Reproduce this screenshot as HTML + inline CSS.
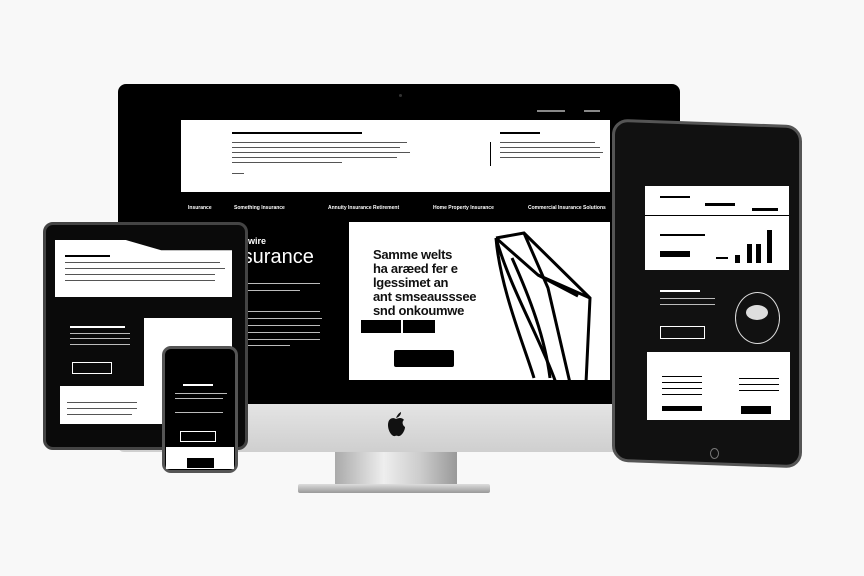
<!DOCTYPE html>
<html><head><meta charset="utf-8"><style>
*{margin:0;padding:0;box-sizing:border-box}
body{width:864px;height:576px;background:#f8f8f8;position:relative;overflow:hidden;font-family:"Liberation Sans",sans-serif}
.a{position:absolute}
.w{background:#fff}.b{background:#000}
.l{position:absolute;height:1px;background:#555}
.lw{position:absolute;height:1px;background:#bbb}
.t{position:absolute;font-weight:bold;font-size:5px;color:#fff;white-space:nowrap}
</style></head><body>
<!-- iMac -->
<div class="a" style="left:335px;top:450px;width:122px;height:36px;background:linear-gradient(90deg,#aaa,#eee 40%,#ccc 70%,#999)"></div>
<div class="a" style="left:298px;top:484px;width:192px;height:9px;background:linear-gradient(#ddd,#999);border-radius:2px"></div>
<div class="a" style="left:118px;top:400px;width:562px;height:52px;background:linear-gradient(#e6e6e6,#cfcfcf);border-radius:0 0 6px 6px"></div>
<svg class="a" style="left:385px;top:410px" width="22" height="28" viewBox="0 0 22 28"><path d="M11 8C13 3 16 2 16 2 16 5 14 7 11 8Z" fill="#111"/><path d="M11 9C8 7 3 8 3 15 3 21 7 27 10 26 11 25.5 12 25.5 13 26 16 27 20 21 20 17 17 15 17 11 19 10 17 7 13 8 11 9Z" fill="#111"/></svg>
<div class="a b" style="left:118px;top:84px;width:562px;height:320px;border-radius:8px 8px 0 0"></div>
<div class="a" style="left:399px;top:94px;width:3px;height:3px;border-radius:50%;background:#333"></div>
<div class="a" style="left:537px;top:110px;width:28px;height:2px;background:#888"></div>
<div class="a" style="left:584px;top:110px;width:16px;height:2px;background:#888"></div>
<div class="a w" style="left:181px;top:120px;width:429px;height:72px"></div>
<div class="a b" style="left:232px;top:132px;width:130px;height:2px"></div>
<div class="l" style="left:232px;top:142px;width:175px"></div><div class="l" style="left:232px;top:147px;width:168px"></div>
<div class="l" style="left:232px;top:152px;width:178px"></div><div class="l" style="left:232px;top:157px;width:165px"></div>
<div class="l" style="left:232px;top:162px;width:110px"></div><div class="l" style="left:232px;top:173px;width:12px"></div>
<div class="a b" style="left:500px;top:132px;width:40px;height:2px"></div>
<div class="a b" style="left:490px;top:142px;width:1px;height:24px"></div>
<div class="l" style="left:500px;top:142px;width:95px"></div><div class="l" style="left:500px;top:147px;width:100px"></div>
<div class="l" style="left:500px;top:152px;width:103px"></div><div class="l" style="left:500px;top:157px;width:100px"></div>
<div class="t" style="left:188px;top:205px">Insurance</div>
<div class="t" style="left:234px;top:205px">Something Insurance</div>
<div class="t" style="left:328px;top:205px">Annuity Insurance Retirement</div>
<div class="t" style="left:433px;top:205px">Home Property Insurance</div>
<div class="t" style="left:528px;top:205px">Commercial Insurance Solutions</div>
<div class="a" style="left:248px;top:236px;color:#fff;font-size:9px;font-weight:bold">wire</div>
<div class="a" style="left:226px;top:246px;color:#fff;font-size:20px">Insurance</div>
<div class="lw" style="left:240px;top:283px;width:80px"></div><div class="lw" style="left:240px;top:290px;width:60px"></div>
<div class="lw" style="left:240px;top:311px;width:80px"></div><div class="lw" style="left:240px;top:318px;width:82px"></div>
<div class="lw" style="left:240px;top:325px;width:80px"></div><div class="lw" style="left:240px;top:332px;width:80px"></div>
<div class="lw" style="left:240px;top:339px;width:80px"></div><div class="lw" style="left:240px;top:345px;width:50px"></div>
<div class="a w" style="left:349px;top:222px;width:261px;height:158px"></div>
<div class="a" style="left:373px;top:248px;font-size:13px;line-height:14px;font-weight:bold;color:#111;letter-spacing:-.3px">Samme welts<br>ha aræed fer e<br>lgessimet an<br>ant smseausssee<br>snd onkoumwe</div>
<div class="a b" style="left:361px;top:320px;width:40px;height:13px"></div>
<div class="a b" style="left:403px;top:320px;width:32px;height:13px"></div>
<div class="a b" style="left:394px;top:350px;width:60px;height:17px;border-radius:2px"></div>
<svg class="a" style="left:490px;top:228px" width="110" height="155" viewBox="0 0 110 155"><g fill="none" stroke="#000" stroke-width="3"><path d="M6 10 L34 5 L100 70 L96 155"/><path d="M6 10 L48 47 L100 70"/><path d="M34 5 L58 60 L80 155"/><path d="M6 10 C 20 60 50 110 66 155"/><path d="M22 30 C 40 70 55 110 60 150"/><path d="M48 47 L88 68"/><path d="M6 10 C 10 60 35 120 44 150"/></g></svg>
<!-- right tablet -->
<div class="a" style="left:612px;top:122px;width:190px;height:343px;background:#111;border:3px solid #555;border-radius:16px;transform:skewY(2deg)"></div>
<div class="a w" style="left:645px;top:186px;width:144px;height:84px"></div>
<div class="a b" style="left:660px;top:196px;width:30px;height:2px"></div>
<div class="a b" style="left:705px;top:203px;width:30px;height:3px"></div>
<div class="a b" style="left:752px;top:208px;width:26px;height:3px"></div>
<div class="a b" style="left:645px;top:215px;width:144px;height:1px"></div>
<div class="a b" style="left:660px;top:234px;width:45px;height:2px"></div>
<div class="a b" style="left:660px;top:251px;width:30px;height:6px"></div>
<div class="a b" style="left:716px;top:257px;width:12px;height:2px"></div>
<div class="a b" style="left:735px;top:255px;width:5px;height:8px"></div>
<div class="a b" style="left:747px;top:244px;width:5px;height:19px"></div>
<div class="a b" style="left:756px;top:244px;width:5px;height:19px"></div>
<div class="a b" style="left:767px;top:230px;width:5px;height:33px"></div>
<div class="a" style="left:660px;top:290px;width:40px;height:2px;background:#fff"></div>
<div class="lw" style="left:660px;top:298px;width:55px"></div><div class="lw" style="left:660px;top:304px;width:55px"></div>
<div class="a" style="left:660px;top:326px;width:45px;height:13px;border:1px solid #fff"></div>
<div class="a" style="left:735px;top:292px;width:45px;height:52px;border:1px solid #ddd;border-radius:50%"></div>
<div class="a" style="left:746px;top:305px;width:22px;height:15px;border-radius:50%;background:#ddd"></div>
<div class="a w" style="left:647px;top:352px;width:143px;height:68px"></div>
<div class="l" style="left:662px;top:376px;width:40px;background:#000"></div><div class="l" style="left:662px;top:382px;width:40px;background:#000"></div>
<div class="l" style="left:662px;top:388px;width:40px;background:#000"></div><div class="l" style="left:662px;top:394px;width:40px;background:#000"></div>
<div class="a b" style="left:662px;top:406px;width:40px;height:5px"></div>
<div class="l" style="left:739px;top:378px;width:40px;background:#000"></div><div class="l" style="left:739px;top:384px;width:40px;background:#000"></div>
<div class="l" style="left:739px;top:390px;width:40px;background:#000"></div>
<div class="a b" style="left:741px;top:406px;width:30px;height:8px"></div>
<div class="a" style="left:710px;top:448px;width:9px;height:11px;border:1px solid #777;border-radius:50%"></div>
<!-- left tablet -->
<div class="a" style="left:43px;top:222px;width:205px;height:228px;background:#0a0a0a;border:3px solid #444;border-radius:10px"></div>
<div class="a w" style="left:55px;top:240px;width:177px;height:57px;clip-path:polygon(0 0,40% 0,60% 18%,100% 18%,100% 100%,0 100%)"></div>
<div class="l" style="left:65px;top:262px;width:155px"></div><div class="l" style="left:65px;top:268px;width:160px"></div>
<div class="l" style="left:65px;top:274px;width:150px"></div><div class="l" style="left:65px;top:280px;width:150px"></div>
<div class="a b" style="left:65px;top:255px;width:45px;height:2px"></div>
<div class="a w" style="left:144px;top:318px;width:88px;height:82px"></div>
<div class="a" style="left:70px;top:326px;width:55px;height:2px;background:#fff"></div>
<div class="lw" style="left:70px;top:333px;width:60px"></div><div class="lw" style="left:70px;top:338px;width:60px"></div><div class="lw" style="left:70px;top:344px;width:60px"></div>
<div class="a" style="left:72px;top:362px;width:40px;height:12px;border:1px solid #fff"></div>
<div class="a w" style="left:60px;top:386px;width:105px;height:38px"></div>
<div class="l" style="left:67px;top:402px;width:70px"></div><div class="l" style="left:67px;top:408px;width:70px"></div><div class="l" style="left:67px;top:414px;width:65px"></div>
<!-- phone -->
<div class="a" style="left:162px;top:346px;width:76px;height:127px;background:#000;border:3px solid #555;border-radius:9px"></div>
<div class="a w" style="left:166px;top:447px;width:68px;height:22px"></div>
<div class="a b" style="left:187px;top:458px;width:27px;height:10px"></div>
<div class="a" style="left:183px;top:384px;width:30px;height:2px;background:#fff"></div>
<div class="lw" style="left:175px;top:393px;width:52px"></div><div class="lw" style="left:175px;top:398px;width:48px"></div>
<div class="lw" style="left:175px;top:412px;width:48px"></div>
<div class="a" style="left:180px;top:431px;width:36px;height:11px;border:1px solid #fff"></div>
</body></html>
